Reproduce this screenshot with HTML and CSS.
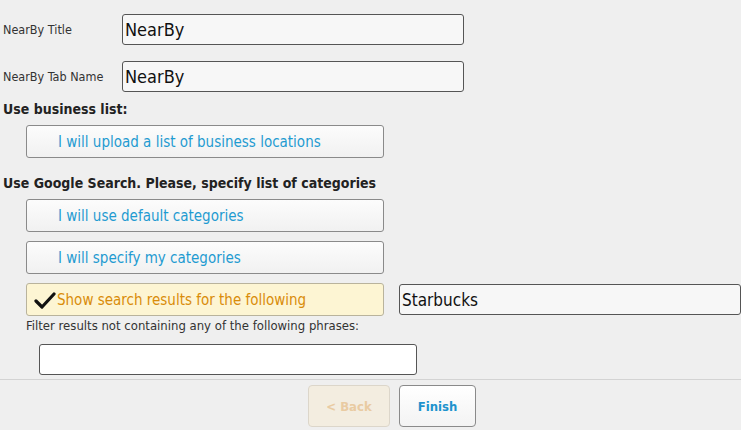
FILE: index.html
```html
<!DOCTYPE html>
<html lang="en">
<head>
    <meta charset="UTF-8">
    <title>NearBy settings</title>
    <link rel="stylesheet" href="styles.css">
</head>
<body>
<div class="wizard">
    <div class="field-row first">
        <label for="title">NearBy Title</label>
        <input type="text" id="title" value="NearBy">
    </div>
    <div class="field-row">
        <label for="tab">NearBy Tab Name</label>
        <input type="text" id="tab" value="NearBy">
    </div>

    <div class="section-title">Use business list:</div>
    <button class="option">I will upload a list of business locations</button>

    <div class="section-title google">Use Google Search. Please, specify list of categories</div>
    <button class="option">I will use default categories</button>
    <button class="option">I will specify my categories</button>

    <div class="search-row">
        <button class="option selected">
            <svg class="check" width="22" height="18" viewBox="0 0 22 18">
                <path d="M2 10 L8 16 L20 3" fill="none" stroke="#111" stroke-width="3.2" stroke-linecap="round" stroke-linejoin="round"/>
            </svg>Show search results for the following</button>
        <input type="text" class="search-input" value="Starbucks">
    </div>
    <div class="filter-label">Filter results not containing any of the following phrases:</div>
    <input type="text" class="filter-input">

    <div class="footer">
        <button class="nav back" disabled>&lt; Back</button>
        <button class="nav finish">Finish</button>
    </div>
</div>
</body>
</html>
```

FILE: styles.css
```css
body {
    margin: 0;
    background-color: #efefef;
    font-family: "DejaVu Sans Condensed", "DejaVu Sans", sans-serif;
    color: #222;
}
.wizard {
    width: 741px;
}
.field-row {
    display: flex;
    align-items: center;
    margin-top: 16px;
}
.field-row.first {
    margin-top: 14px;
}
.field-row label {
    width: 119px;
    padding-left: 3px;
    font-size: 12.5px;
    color: #333;
}
.field-row input {
    width: 342px;
    height: 31px;
    box-sizing: border-box;
    padding: 0 2px;
    border: 1px solid #555;
    border-radius: 3px;
    background-color: #f7f7f7;
    font-family: inherit;
    font-size: 18px;
    color: #111;
}
.section-title {
    margin: 9px 0 8px 3px;
    line-height: 16px;
    font-size: 14px;
    font-weight: bold;
    color: #222;
}
.section-title.google {
    margin-top: 17px;
}
.option {
    display: flex;
    align-items: center;
    width: 358px;
    height: 33px;
    margin: 0 0 9px 26px;
    padding: 0 0 0 31px;
    border: 1px solid #8a8a8a;
    border-radius: 3px;
    background: linear-gradient(#fcfcfc, #f1f1f1);
    font-family: inherit;
    font-size: 15px;
    color: #1f9bd1;
    text-align: left;
    box-sizing: border-box;
}
.search-row {
    display: flex;
    align-items: center;
}
.search-row .option {
    margin-bottom: 0;
}
.option.selected {
    padding-left: 7px;
    background: #fdf5d3;
    border-color: #b9b39c;
    color: #d98c0a;
}
.check {
    margin-right: 1px;
}
.search-input {
    width: 342px;
    height: 31px;
    margin-left: 15px;
    box-sizing: border-box;
    padding: 0 2px;
    border: 1px solid #555;
    border-radius: 3px;
    background-color: #f7f7f7;
    font-family: inherit;
    font-size: 17px;
    color: #111;
}
.filter-label {
    margin: 2px 0 0 26px;
    line-height: 16px;
    font-size: 13px;
    color: #333;
}
.filter-input {
    display: block;
    width: 378px;
    height: 31px;
    margin: 10px 0 0 39px;
    box-sizing: border-box;
    border: 1px solid #555;
    border-radius: 3px;
    background-color: #fff;
}
.footer {
    display: flex;
    gap: 9px;
    margin-top: 4px;
    padding: 5px 0 0 308px;
    border-top: 1px solid #d3d3d3;
}
.nav {
    height: 42px;
    border-radius: 4px;
    font-family: inherit;
    font-size: 13px;
    font-weight: bold;
}
.back {
    width: 82px;
    border: 1px solid #dcd6ca;
    background-color: #f3ede0;
    color: #e9cba2;
}
.finish {
    width: 77px;
    border: 1px solid #8a8a8a;
    background: linear-gradient(#ffffff, #f3f3f3);
    color: #1e93cd;
}
```
